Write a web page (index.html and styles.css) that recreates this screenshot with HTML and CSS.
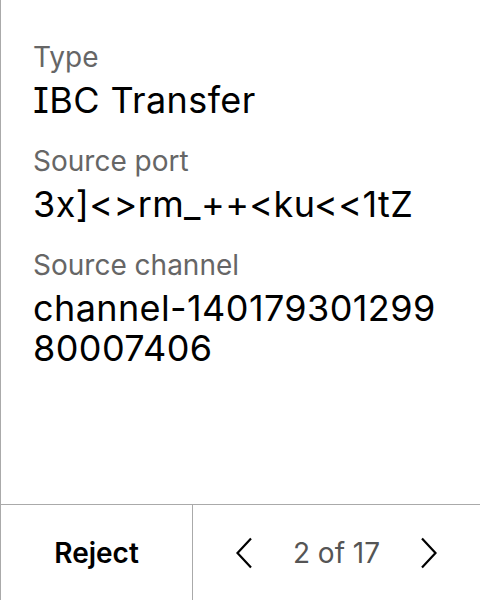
FILE: index.html
```html
<!DOCTYPE html>
<html>
<head>
<meta charset="utf-8">
<link rel="stylesheet" href="styles.css">
</head>
<body>
<div class="screen">
  <div class="content">
    <div class="field">
      <div class="label">Type</div>
      <div class="value">IBC Transfer</div>
    </div>
    <div class="field">
      <div class="label">Source port</div>
      <div class="value">3x]&lt;&gt;rm_++&lt;ku&lt;&lt;1tZ</div>
    </div>
    <div class="field">
      <div class="label">Source channel</div>
      <div class="value">channel-14017930129980007406</div>
    </div>
  </div>
  <div class="footer">
    <div class="reject">Reject</div>
    <div class="pager">
      <svg class="chev" width="18" height="32" viewBox="0 0 18 32"><path d="M16 1.5 L2.5 16 L16 30.5" fill="none" stroke="#000" stroke-width="2.2"/></svg>
      <span class="count">2 of 17</span>
      <svg class="chev" width="18" height="32" viewBox="0 0 18 32"><path d="M2 1.5 L15.5 16 L2 30.5" fill="none" stroke="#000" stroke-width="2.2"/></svg>
    </div>
  </div>
</div>
</body>
</html>
```
FILE: styles.css
```css
html, body {
  margin: 0;
  padding: 0;
  background: #fff;
}
.screen {
  width: 480px;
  height: 600px;
  box-sizing: border-box;
  border-left: 1px solid #aaa;
  display: flex;
  flex-direction: column;
  font-family: Inter, "Noto Sans", sans-serif;
  font-feature-settings: "cv08" 1;
}
.content {
  flex: 1;
  padding: 40px 32px 0 32px;
  display: flex;
  flex-direction: column;
  gap: 24px;
}
.field {
  display: flex;
  flex-direction: column;
  gap: 6px;
}
.label {
  font-size: 28px;
  line-height: 34px;
  color: #666;
}
.value {
  font-size: 36px;
  line-height: 40px;
  letter-spacing: 0.4px;
  color: #000;
  word-break: break-all;
}
.footer {
  height: 96px;
  box-sizing: border-box;
  border-top: 1px solid #aaa;
  display: flex;
}
.reject {
  width: 191px;
  border-right: 1px solid #aaa;
  display: flex;
  align-items: center;
  justify-content: center;
  font-size: 28px;
  font-weight: 600;
  color: #000;
}
.pager {
  flex: 1;
  display: flex;
  align-items: center;
  justify-content: center;
  gap: 40px;
}
.count {
  font-size: 28px;
  color: #555;
}
```
